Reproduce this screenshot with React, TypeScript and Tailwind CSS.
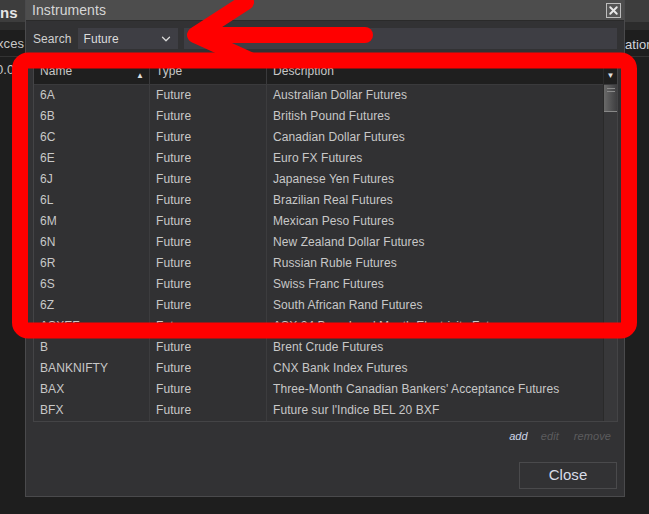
import {ChevronDown, X} from "lucide-react";

const rows: [string, string, string][] = [
    ["6A", "Future", "Australian Dollar Futures"],
    ["6B", "Future", "British Pound Futures"],
    ["6C", "Future", "Canadian Dollar Futures"],
    ["6E", "Future", "Euro FX Futures"],
    ["6J", "Future", "Japanese Yen Futures"],
    ["6L", "Future", "Brazilian Real Futures"],
    ["6M", "Future", "Mexican Peso Futures"],
    ["6N", "Future", "New Zealand Dollar Futures"],
    ["6R", "Future", "Russian Ruble Futures"],
    ["6S", "Future", "Swiss Franc Futures"],
    ["6Z", "Future", "South African Rand Futures"],
    ["ASXEF", "Future", "ASX 24 Base Load Month Electricity Futures"],
    ["B", "Future", "Brent Crude Futures"],
    ["BANKNIFTY", "Future", "CNX Bank Index Futures"],
    ["BAX", "Future", "Three-Month Canadian Bankers' Acceptance Futures"],
    ["BFX", "Future", "Future sur l'Indice BEL 20 BXF"],
];

export default function App() {
    return (
        <div className="relative w-[649px] h-[514px] overflow-hidden bg-[#1e1e1e] font-['Liberation_Sans',Arial,sans-serif] text-[12px] tracking-[0.08px] text-[#c8c8c8]">
            <div className="flex">
                {/* background app, left edge */}
                <div className="w-[25px] shrink-0">
                    <div className="h-[22px] bg-[#3d3d3d] text-[15px] font-bold leading-[26px] text-[#e6e6e6] overflow-hidden">ns</div>
                    <div className="h-[8px] bg-[#2c2c2c]"/>
                    <div className="h-[27px] border-b border-[#333] text-[13px] leading-[28px] whitespace-nowrap overflow-hidden -indent-[3px]">xces</div>
                    <div className="h-[26px] text-[13px] leading-[26px] whitespace-nowrap overflow-hidden -indent-[4px]">0.0</div>
                </div>

                {/* dialog */}
                <div className="w-[600px] h-[497px] shrink-0 flex flex-col border border-t-0 border-[#4a4a4c] bg-[#323234]">
                    <div className="h-[20px] flex items-center justify-between bg-[#4d4d4d] pl-[6px] pr-[3px]">
                        <span className="text-[14px] text-[#d6d6d6]">Instruments</span>
                        <span className="w-[15px] h-[15px] flex items-center justify-center border border-[#bdbdbd] bg-[#555]">
                            <X size={13} strokeWidth={3.5} className="text-[#e8e8e8]"/>
                        </span>
                    </div>
                    <div className="h-[1px] bg-[#2a2a2a]"/>
                    <div className="flex items-center gap-[6px] pl-[7px] pr-[7px] pt-[7px] pb-[11px]">
                        <span className="text-[#d0d0d0]">Search</span>
                        <div className="w-[100px] h-[21px] flex items-center justify-between bg-[#3e3e44] pl-[6px] pr-[5px] text-[#dcdcdc]">
                            <span>Future</span>
                            <ChevronDown size={14} strokeWidth={2.2} className="text-[#d8d8d8]"/>
                        </div>
                        <div className="flex-1 h-[21px] bg-[#3e3e44]"/>
                    </div>

                    {/* table */}
                    <div className="ml-[7px] w-[585px] h-[362px] border border-[#444446] flex">
                        <div className="flex-1 flex flex-col">
                            <div className="h-[24px] grid grid-cols-[116px_117px_1fr] bg-[#1f1f1f] border-b border-[#3a3a3c]">
                                <div className="relative pl-[6px] leading-[21px] border-r border-[#3a3a3c]">
                                    Name
                                    <span className="absolute right-[5px] top-[4px] text-[8px] text-[#ddd]">▲</span>
                                </div>
                                <div className="pl-[6px] leading-[21px] border-r border-[#3a3a3c]">Type</div>
                                <div className="pl-[6px] leading-[21px]">Description</div>
                            </div>
                            {rows.map(r => (
                                <div key={r[0]} className="h-[21px] grid grid-cols-[116px_117px_1fr] bg-[#313133]">
                                    <div className="pl-[6px] leading-[21px] border-r border-[#3c3c3e]">{r[0]}</div>
                                    <div className="pl-[6px] leading-[21px] border-r border-[#3c3c3e]">{r[1]}</div>
                                    <div className="pl-[6px] leading-[21px] whitespace-nowrap overflow-hidden">{r[2]}</div>
                                </div>
                            ))}
                        </div>
                        <div className="w-[14px] flex flex-col border-l border-[#2a2a2a]">
                            <div className="h-[24px] bg-[#1f1f1f] flex items-end justify-center pb-[3px] border-b border-[#3a3a3c]">
                                <span className="text-[8px] leading-[10px] text-[#e0e0e0]">▼</span>
                            </div>
                            <div className="flex-1 bg-[#38383a]">
                                <div className="h-[27px] bg-gradient-to-r from-[#6a6a6a] to-[#3e3e40] border-b border-[#888] flex flex-col items-end pr-[2px] pt-[3px] gap-[2px]">
                                    <div className="w-[8px] h-[1px] bg-[#8a8a8a]"/>
                                    <div className="w-[8px] h-[1px] bg-[#8a8a8a]"/>
                                </div>
                            </div>
                        </div>
                    </div>

                    <div className="flex justify-end pr-[13px] pt-[6px] text-[11px] italic">
                        <span className="mr-[13px] text-[#cfd8ea]">add</span>
                        <span className="mr-[15px] text-[#5c5c5e]">edit</span>
                        <span className="text-[#5c5c5e]">remove</span>
                    </div>
                    <div className="flex justify-end pr-[7px] pt-[17px]">
                        <div className="w-[98px] h-[27px] border border-[#4a4a4c] flex items-center justify-center text-[15px] text-[#d8dce8]">Close</div>
                    </div>
                </div>

                {/* background app, right edge */}
                <div className="flex-1">
                    <div className="h-[22px] bg-[#3d3d3d]"/>
                    <div className="h-[8px] bg-[#2c2c2c]"/>
                    <div className="h-[27px] border-b border-[#333] text-[13px] leading-[30px] whitespace-nowrap overflow-hidden -indent-[3px] text-[#d0d4dc]">lation</div>
                </div>
            </div>

            {/* red annotation */}
            <svg className="absolute inset-0 pointer-events-none" width="649" height="514" viewBox="0 0 649 514">
                <rect x="20" y="60.5" width="609" height="270" rx="8" fill="none" stroke="#ff0000" strokeWidth="16" strokeLinejoin="round"/>
                <line x1="196" y1="35" x2="365" y2="35" stroke="#ff0000" strokeWidth="16" strokeLinecap="round"/>
                <polyline points="246,2 195,35 250,60" fill="none" stroke="#ff0000" strokeWidth="16" strokeLinecap="round" strokeLinejoin="round"/>
            </svg>
        </div>
    );
}
